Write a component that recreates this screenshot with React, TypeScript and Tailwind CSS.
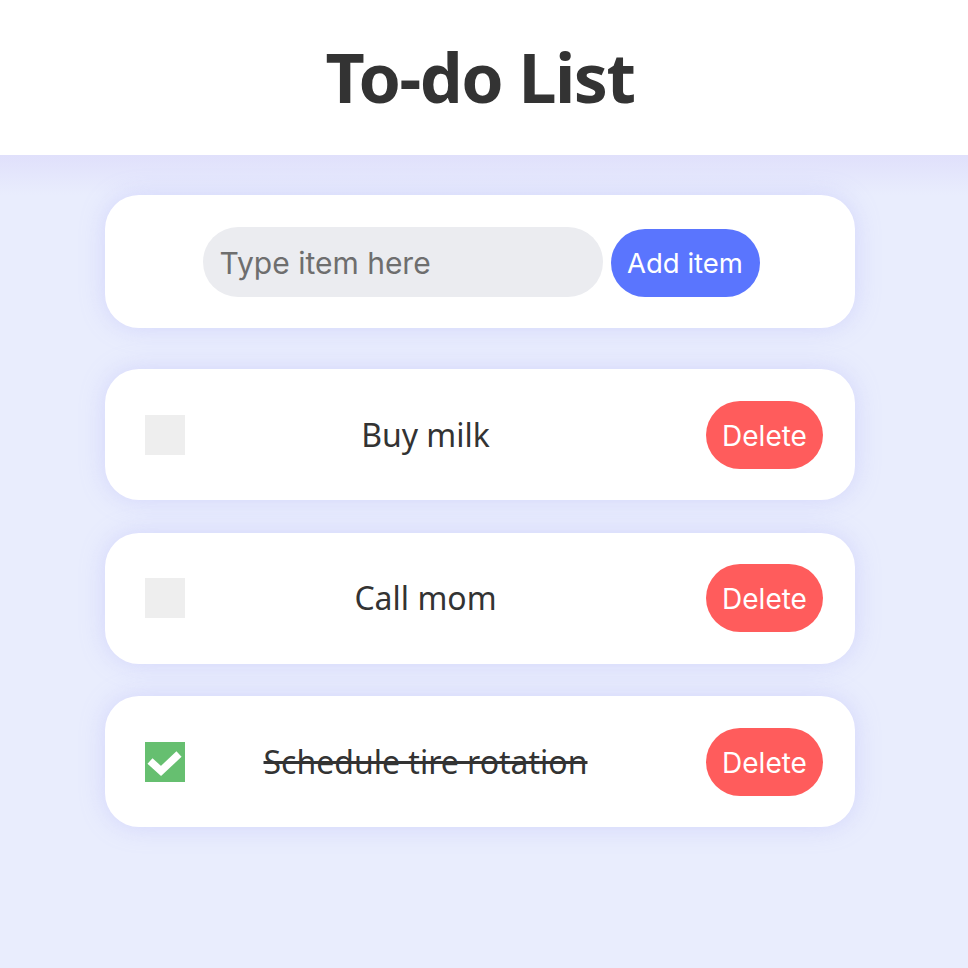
import React, { useState } from "react";

type Item = { id: number; text: string; done: boolean };

function Check() {
  return (
    <svg viewBox="0 0 40 40" className="w-[40px] h-[40px]">
      <rect width="40" height="40" fill="#66bf70" />
      <path d="M5 19 L16 29 L34 12" stroke="#fff" strokeWidth="7.5" fill="none" strokeLinejoin="miter" />
    </svg>
  );
}

export default function App() {
  const [items, setItems] = useState<Item[]>([
    { id: 1, text: "Buy milk", done: false },
    { id: 2, text: "Call mom", done: false },
    { id: 3, text: "Schedule tire rotation", done: true },
  ]);
  const [val, setVal] = useState("");
  const sans = { fontFamily: '"Noto Sans", sans-serif' };
  const inter = { fontFamily: 'Inter, sans-serif' };
  return (
    <div className="min-h-[968px] bg-[#e9edfd]">
      <header className="h-[155px] bg-white flex items-center justify-center pr-[8px]">
        <h1 className="text-[68px] font-bold text-[#333] tracking-[-1.5px] leading-none pb-[2px]" style={sans}>
          To-do List
        </h1>
      </header>
      <div className="bg-gradient-to-b from-[#e0e0fb] to-[#e9edfd] h-[40px]" />
      <main className="w-[750px] ml-[105px] flex flex-col gap-[41px]">
        <div className="bg-white rounded-[34px] h-[133px] shadow-[0_0_24px_rgba(170,170,250,0.35)] flex items-center justify-center gap-[8px] pl-[2px]">
          <input
            value={val}
            onChange={(e) => setVal(e.target.value)}
            placeholder="Type item here"
            className="w-[400px] h-[70px] rounded-full bg-[#ebecf0] px-[17px] pt-[2px] text-[30px] text-[#333] placeholder:text-[#6e6e6e] outline-none"
            style={inter}
          />
          <button className="w-[149px] h-[68px] mt-[2px] pt-[2px] rounded-full bg-[#5a75fe] text-white text-[27.5px]" style={inter}>
            Add item
          </button>
        </div>
        <div className="flex flex-col gap-[32.5px]">
          {items.map((it) => (
            <div
              key={it.id}
              className="bg-white rounded-[34px] h-[131px] shadow-[0_0_24px_rgba(170,170,250,0.35)] flex items-center pl-[40px] pr-[32px]"
            >
              <button
                className="w-[40px] h-[40px] shrink-0"
                onClick={() =>
                  setItems(items.map((x) => (x.id === it.id ? { ...x, done: !x.done } : x)))
                }
              >
                {it.done ? <Check /> : <div className="w-[40px] h-[40px] bg-[#eeeeee]" />}
              </button>
              <div
                className={`flex-1 text-center text-[32px] text-[#333] pr-[40px] ${it.done ? "line-through" : ""}`}
                style={sans}
              >
                {it.text}
              </div>
              <button
                className="w-[117px] h-[68px] pt-[2px] rounded-full bg-[#ff5c5c] text-white text-[28px] shrink-0"
                style={inter}
                onClick={() => setItems(items.filter((x) => x.id !== it.id))}
              >
                Delete
              </button>
            </div>
          ))}
        </div>
      </main>
    </div>
  );
}
